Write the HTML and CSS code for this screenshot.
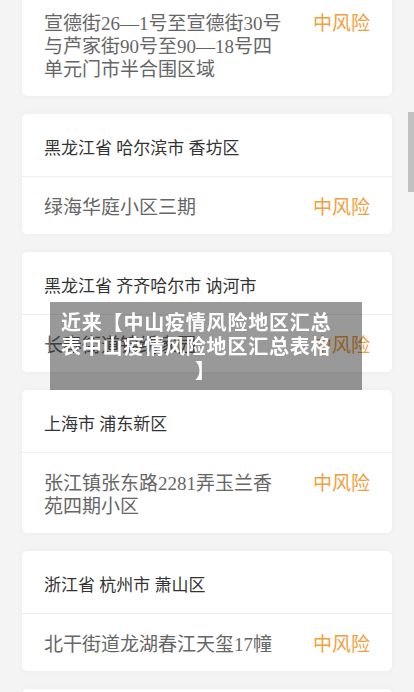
FILE: index.html
```html
<!DOCTYPE html>
<html lang="zh-CN">
<head>
<meta charset="UTF-8">
<meta name="viewport" content="width=device-width, initial-scale=1.0">
<title>中山疫情风险地区汇总表格</title>
<link rel="stylesheet" href="styles.css">
</head>
<body>
<div class="list">
    <div class="card">
        <div class="area">广东省 中山市</div>
        <div class="place">
            <span class="addr">宣德街26—1号至宣德街30号与芦家街90号至90—18号四单元门市半合围区域</span>
            <span class="risk">中风险</span>
        </div>
    </div>
    <div class="card">
        <div class="area">黑龙江省 哈尔滨市 香坊区</div>
        <div class="place">
            <span class="addr">绿海华庭小区三期</span>
            <span class="risk">中风险</span>
        </div>
    </div>
    <div class="card">
        <div class="area">黑龙江省 齐齐哈尔市 讷河市</div>
        <div class="place">
            <span class="addr">长春街道锦绣家园</span>
            <span class="risk">中风险</span>
        </div>
    </div>
    <div class="card">
        <div class="area">上海市 浦东新区</div>
        <div class="place">
            <span class="addr">张江镇张东路2281弄玉兰香苑四期小区</span>
            <span class="risk">中风险</span>
        </div>
    </div>
    <div class="card">
        <div class="area">浙江省 杭州市 萧山区</div>
        <div class="place">
            <span class="addr">北干街道龙湖春江天玺17幢</span>
            <span class="risk">中风险</span>
        </div>
    </div>
    <div class="card">
        <div class="area">浙江省 杭州市 萧山区</div>
        <div class="place">
            <span class="addr">北干街道</span>
            <span class="risk">中风险</span>
        </div>
    </div>
</div>

<div class="title-mask">近来【中山疫情风险地区汇总表中山疫情风险地区汇总表格】</div>
<div class="scroll-thumb"></div>
</body>
</html>
```

FILE: styles.css
```css
/* Basic styling */
body {
    margin: 0;
    padding: 0;
    background-color: #f4f4f4;
    font-family: "Liberation Serif", "Noto Sans CJK SC", serif;
    overflow: hidden;
}
.list {
    margin-top: -70px;
    padding: 0 22px;
    display: flex;
    flex-direction: column;
    gap: 18px;
}
.card {
    background-color: #fff;
    border-radius: 5px;
    box-shadow: 0 0 6px rgba(0, 0, 0, 0.04);
}
.area {
    font-size: 17px;
    line-height: 23px;
    color: #333;
    padding: 23px 22px 16px;
    border-bottom: 1px solid #eee;
}
.place {
    display: flex;
    align-items: flex-start;
    gap: 30px;
    padding: 19px 22px 15px;
    font-size: 19px;
    line-height: 23px;
}
.addr {
    flex: 1;
    color: #666;
}
.risk {
    color: #f0a03c;
    white-space: nowrap;
}
.title-mask {
    position: fixed;
    left: 50px;
    top: 302px;
    width: 289px;
    padding: 8px 12px 8px 11px;
    background-color: rgba(0, 0, 0, 0.4);
    color: #fff;
    font-family: "Noto Sans CJK SC", sans-serif;
    font-weight: bold;
    font-size: 20px;
    letter-spacing: 0.8px;
    line-height: 24px;
    text-align: left;
    text-align-last: center;
    line-break: anywhere;
    text-spacing-trim: space-all;
}
.scroll-thumb {
    position: fixed;
    right: 0;
    top: 112px;
    width: 6px;
    height: 80px;
    background-color: #c1c1c1;
}
```
